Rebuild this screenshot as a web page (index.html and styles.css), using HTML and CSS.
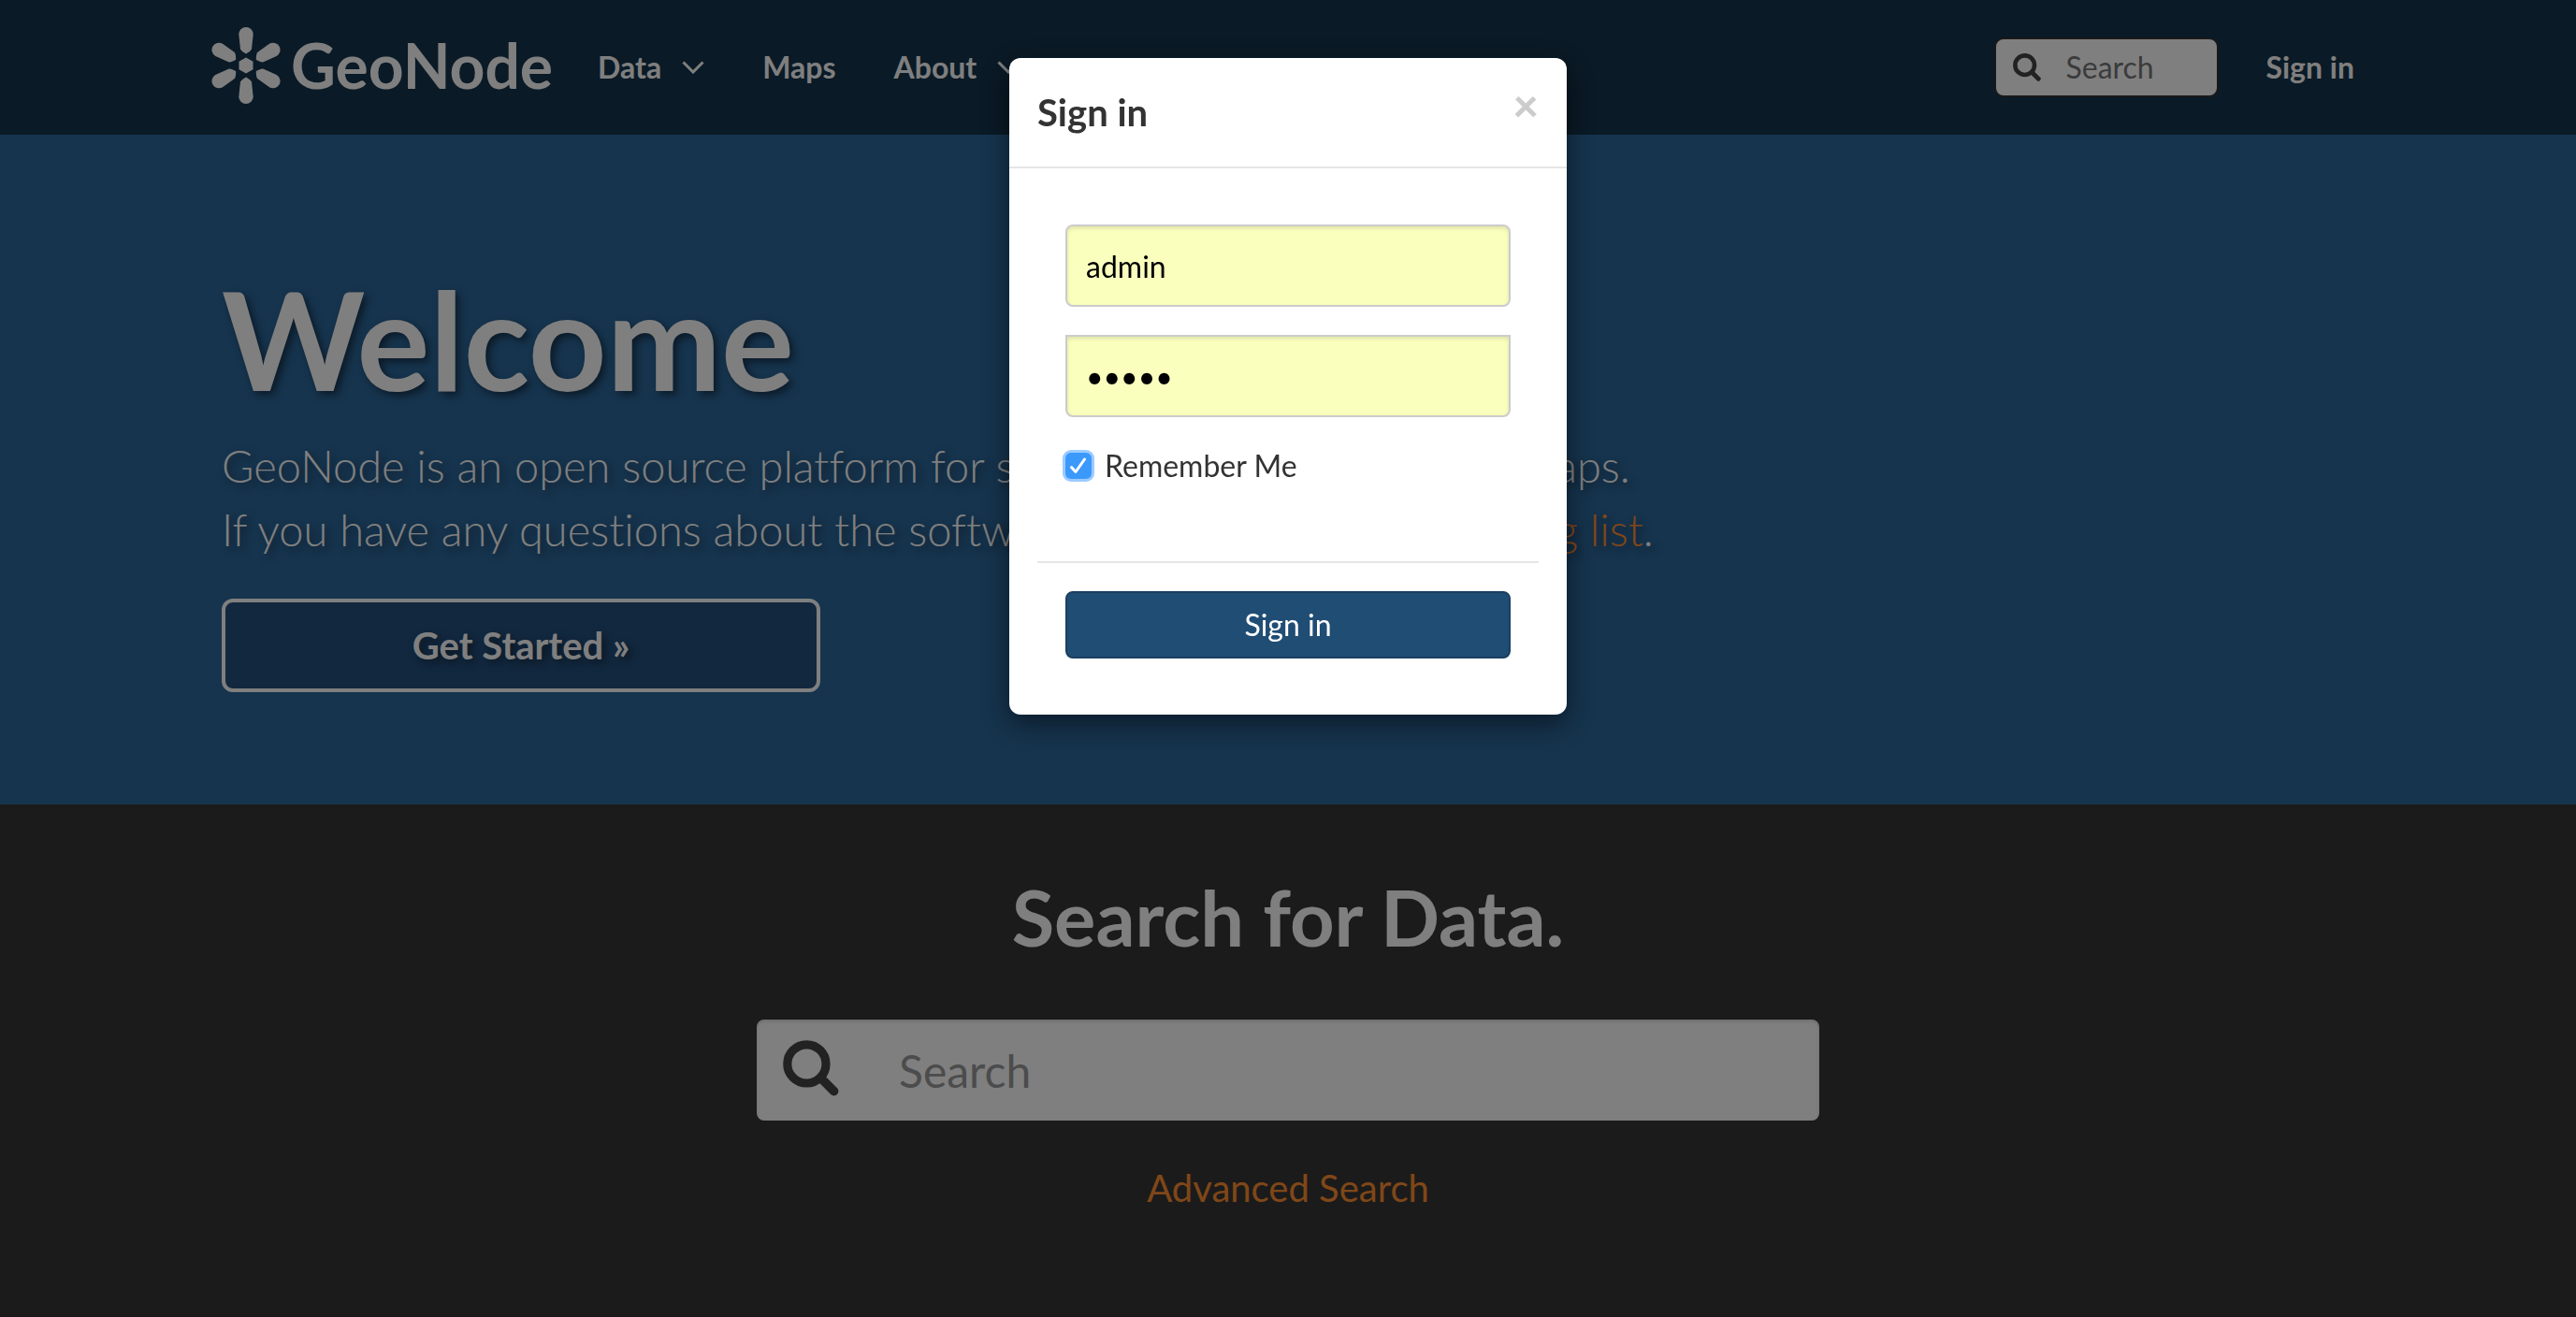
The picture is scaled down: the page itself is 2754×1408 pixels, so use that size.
FILE: index.html
```html
<!DOCTYPE html>
<html lang="en">
<head>
<meta charset="utf-8">
<title>GeoNode - Welcome</title>
<link rel="stylesheet" href="styles.css">
</head>
<body>
<svg class="symbols" aria-hidden="true">
  <symbol id="icon-search" viewBox="0 0 30 30">
    <g fill="none" stroke="currentColor" stroke-linecap="round">
      <circle cx="12.7" cy="12.7" r="10.3" stroke-width="4.6"/>
      <path d="M20.2 20.2 27.3 27.3" stroke-width="4.8"/>
    </g>
  </symbol>
  <symbol id="icon-chevron" viewBox="0 0 24 14">
    <path d="M1.5 1.5 12 12 22.5 1.5" fill="none" stroke="currentColor" stroke-width="3"/>
  </symbol>
</svg>

<header class="navbar">
  <div class="container navbar-inner">
    <a class="brand" href="#" aria-label="GeoNode">
      <svg class="brand-mark" viewBox="-38 -41 76 82" aria-hidden="true">
        <g fill="currentColor">
          <path d="M0-8.5 7.5-4.3V4.3L0 8.5-7.5 4.3V-4.3Z"/>
          <path id="petal" d="M-7.7-33.3a7.7 7.7 0 0 1 15.4 0L6-17.5C5-15.5 2-13.5 0-12.5-2-13.5-5-15.5-6-17.5Z"/>
          <use href="#petal" transform="rotate(60)"/>
          <use href="#petal" transform="rotate(120)"/>
          <use href="#petal" transform="rotate(180)"/>
          <use href="#petal" transform="rotate(240)"/>
          <use href="#petal" transform="rotate(300)"/>
        </g>
      </svg>
      <span class="brand-name">GeoNode</span>
    </a>
    <nav class="nav">
      <a href="#">Data <svg class="chevron" aria-hidden="true"><use href="#icon-chevron"/></svg></a>
      <a href="#">Maps</a>
      <a href="#">About <svg class="chevron" aria-hidden="true"><use href="#icon-chevron"/></svg></a>
    </nav>
    <div class="nav nav-right">
      <label class="search search-small">
        <svg aria-hidden="true"><use href="#icon-search"/></svg>
        <input type="text" placeholder="Search" aria-label="Search">
      </label>
      <a href="#">Sign in</a>
    </div>
  </div>
</header>

<section class="hero">
  <div class="container">
    <h1>Welcome</h1>
    <p>GeoNode is an open source platform for sharing geospatial data and maps.<br>
    If you have any questions about the software or service, join our <a href="#">mailing list</a>.</p>
    <a class="btn-start" href="#">Get Started »</a>
  </div>
</section>

<section class="finder">
  <h2>Search for Data.</h2>
  <label class="search search-large">
    <svg aria-hidden="true"><use href="#icon-search"/></svg>
    <input type="text" placeholder="Search" aria-label="Search for data">
  </label>
  <a class="advanced" href="#">Advanced Search</a>
</section>

<div class="backdrop">
  <form class="modal" role="dialog" aria-labelledby="modal-title">
    <div class="modal-header">
      <h3 id="modal-title">Sign in</h3>
      <button class="close" type="button" aria-label="Close">×</button>
    </div>
    <div class="modal-body">
      <input class="field" type="text" value="admin" aria-label="Username">
      <input class="field field-password" type="password" value="admin" aria-label="Password">
      <label class="remember"><input type="checkbox" checked>Remember Me</label>
    </div>
    <div class="modal-footer">
      <button class="btn-submit" type="submit">Sign in</button>
    </div>
  </form>
</div>
</body>
</html>
```
FILE: styles.css
```css
* {
  box-sizing: border-box;
}

body {
  margin: 0;
  min-height: 100vh;
  display: flex;
  flex-direction: column;
  font-family: Lato, "Liberation Sans", sans-serif;
  font-size: 32px;
  line-height: 44px;
  font-variant-ligatures: none;
  color: #333;
  background: #363636;
}

h1, h2, h3, p {
  margin: 0;
}

a {
  color: inherit;
  text-decoration: none;
}

input, button {
  font: inherit;
}

.symbols {
  position: absolute;
  width: 0;
  height: 0;
}

.container {
  width: 100%;
  max-width: 2340px;
  margin: 0 auto;
  padding: 0 30px;
}

/* Top bar */
.navbar {
  background: #14344c;
  color: #fff;
}

.navbar-inner {
  height: 144px;
  display: flex;
  align-items: center;
  padding-left: 18px;
}

.brand {
  display: flex;
  align-items: center;
  gap: 10px;
  margin-right: 48px;
  padding-bottom: 4px;
}

.brand-mark {
  width: 76px;
  height: 82px;
}

.brand-name {
  font-weight: 700;
  font-size: 66px;
  line-height: 82px;
}

.nav {
  display: flex;
  align-items: center;
  gap: 62px;
  font-weight: 700;
}

.nav a {
  display: flex;
  align-items: center;
  gap: 22px;
}

.nav-right {
  margin-left: auto;
  gap: 50px;
}

.chevron {
  width: 24px;
  height: 14px;
}

.search {
  display: flex;
  align-items: center;
  background: #fff;
  color: #444;
}

.search input {
  min-width: 0;
  flex: 1;
  padding: 0;
  border: 0;
  outline: 0;
  background: transparent;
}

.search-small {
  width: 240px;
  height: 64px;
  padding: 0 18px;
  gap: 26px;
  border: 2px solid #333;
  border-radius: 10px;
  font-weight: 400;
}

.search-small svg {
  width: 30px;
  height: 30px;
}

.search-small input::placeholder {
  color: #777;
}

/* Hero */
.hero {
  padding: 122px 0 120px;
  background: #2c689c;
  color: #fff;
  text-shadow: 4px 4px 8px rgba(0, 0, 0, .5);
}

.hero h1 {
  margin-bottom: 6px;
  font-size: 146px;
  line-height: 192px;
}

.hero p {
  font-weight: 300;
  font-size: 47px;
  line-height: 68px;
  margin-bottom: 40px;
}

.hero p a {
  color: #ff8f31;
}

.btn-start {
  display: flex;
  align-items: center;
  justify-content: center;
  width: 640px;
  max-width: 100%;
  height: 100px;
  border: 4px solid #fff;
  border-radius: 12px;
  background: #24507e;
  font-weight: 700;
  font-size: 40px;
}

/* Data search */
.finder {
  flex: 1;
  display: flex;
  flex-direction: column;
  align-items: center;
  padding: 68px 30px 80px;
  border-bottom: 2px solid #3a2f38;
}

.finder h2 {
  font-size: 83px;
  line-height: 104px;
  margin-bottom: 58px;
  color: #fff;
}

.search-large {
  width: 100%;
  max-width: 1136px;
  height: 108px;
  padding: 0 28px;
  gap: 64px;
  border-radius: 8px;
  box-shadow: inset 0 2px 4px rgba(0, 0, 0, .15);
  font-size: 48px;
}

.search-large svg {
  width: 60px;
  height: 60px;
  margin-bottom: 4px;
}

.search-large input::placeholder {
  color: #999;
}

.advanced {
  margin-top: 50px;
  font-size: 40px;
  color: #ff8f31;
}

/* Sign-in dialog */
.backdrop {
  position: fixed;
  inset: 0;
  padding: 62px 20px;
  background: rgba(0, 0, 0, .5);
}

.modal {
  width: 100%;
  max-width: 596px;
  margin: 0 auto;
  border-radius: 12px;
  background: #fff;
  box-shadow: 0 10px 30px rgba(0, 0, 0, .5);
}

.modal-header {
  display: flex;
  justify-content: space-between;
  align-items: flex-start;
  padding: 30px;
  border-bottom: 2px solid #e5e5e5;
}

.modal-header h3 {
  font-size: 40px;
  line-height: 56px;
}

.close {
  padding: 0;
  border: 0;
  background: none;
  font-weight: 900;
  font-size: 48px;
  line-height: 40px;
  color: #ccc;
}

.modal-body {
  display: flex;
  flex-direction: column;
  padding: 60px 60px 80px;
}

.field {
  width: 100%;
  height: 88px;
  margin-bottom: 30px;
  padding: 0 20px;
  border: 2px solid #ccc;
  border-radius: 8px;
  outline: 0;
  background: #faffbd;
  color: #000;
  box-shadow: inset 0 2px 4px rgba(0, 0, 0, .12);
}

.field-password {
  border-radius: 0 0 8px 8px;
}

.remember {
  display: flex;
  align-items: center;
  gap: 14px;
}

.remember input {
  appearance: none;
  width: 28px;
  height: 28px;
  margin: 0;
  border-radius: 6px;
  box-shadow: 0 0 0 3px #9ccbff;
  background: #3b99fc url("data:image/svg+xml,%3Csvg xmlns='http://www.w3.org/2000/svg' viewBox='0 0 28 28'%3E%3Cpath d='M6.5 15.5 11 20.5 20.5 7' fill='none' stroke='%23fff' stroke-width='3' stroke-linecap='round' stroke-linejoin='round'/%3E%3C/svg%3E") center / contain;
}

.modal-footer {
  margin: 0 30px;
  padding: 30px 30px 60px;
  border-top: 2px solid #e5e5e5;
}

.btn-submit {
  display: block;
  width: 100%;
  height: 72px;
  border: 2px solid #1a3f60;
  border-radius: 8px;
  background: #204d74;
  color: #fff;
}
```
